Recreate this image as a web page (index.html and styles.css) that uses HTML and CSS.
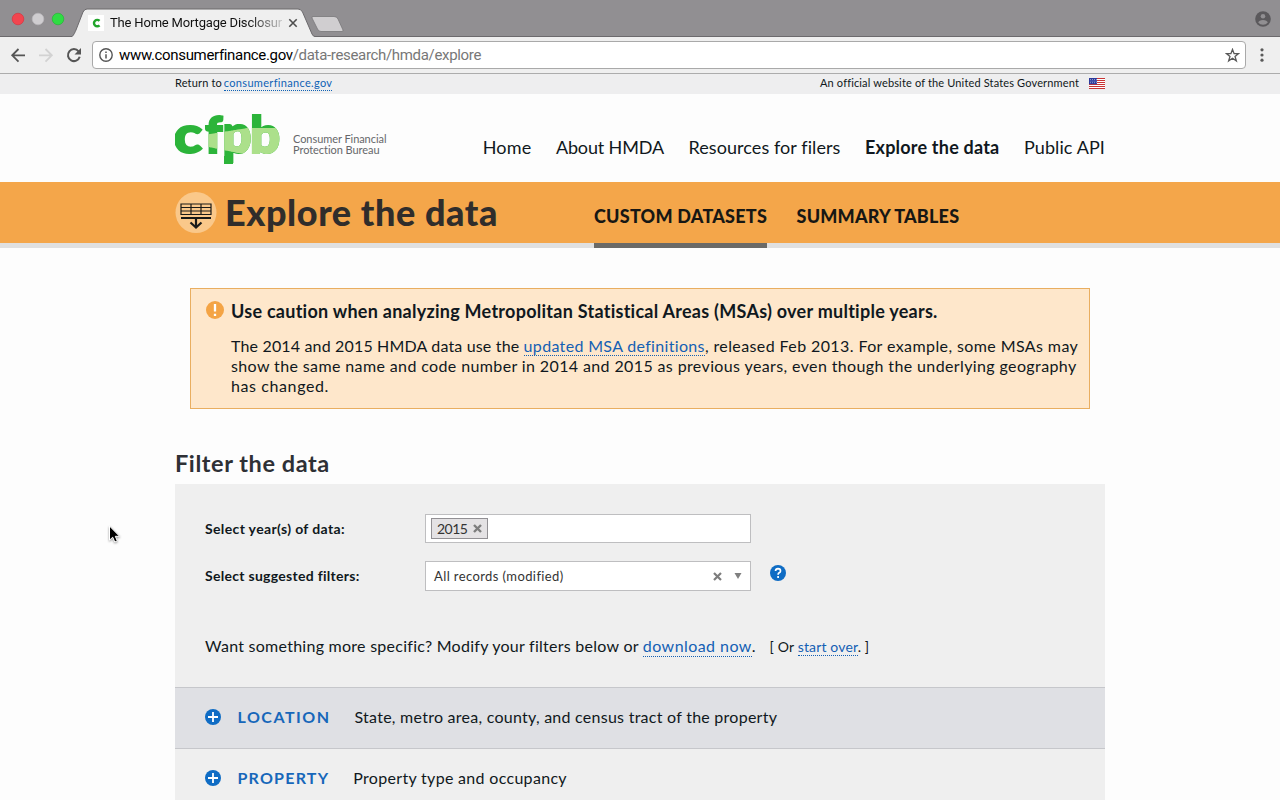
FILE: index.html
```
<!DOCTYPE html>
<html lang="en">
<head>
<meta charset="utf-8">
<title>The Home Mortgage Disclosure Act</title>
<link rel="stylesheet" href="styles.css">
</head>
<body>
<div class="tabstrip">
  <svg class="tabshapes" width="360" height="37" viewBox="0 0 360 37">
    <circle cx="18" cy="19" r="5.8" fill="#f2454f" stroke="#d8343f" stroke-width=".7"/>
    <circle cx="38" cy="19" r="5.8" fill="#cfcdd0" stroke="#bab8bb" stroke-width=".7"/>
    <circle cx="58" cy="19" r="5.8" fill="#2fdc43" stroke="#25b636" stroke-width=".7"/>
    <path d="M72 37C74 35 75 32 76 30L83 12Q84.500 9 87 9H298Q301 9 302.500 12L312 34Q313 36 315 37Z" fill="#efefef"/>
    <path d="M0 36.500H72C74 35 75 32 76 30L83 12Q84.500 9 87 9H298Q301 9 302.500 12L312 34Q313 36.500 315 36.500H360" fill="none" stroke="#6c6a6d"/>
    <path d="M313 16.500H334Q337 16.500 338 19L343 30Q343.500 31.500 342 31.500H321Q318.500 31.500 317.500 29L312 18Q311.500 16.500 313 16.500Z" fill="#d0ced0" stroke="#79777a" stroke-width=".8"/>
  </svg>
  <div class="tab">
    <svg class="favicon" width="16" height="16" viewBox="0 0 16 16"><rect width="16" height="16" fill="#fff"/><path d="M11.500 5.900A3.200 3.200 0 1 0 11.500 10.300" fill="none" stroke="#22a52c" stroke-width="2.400"/></svg>
    <span class="tab-title">The Home Mortgage Disclosur</span>
    <svg class="tab-close" width="10" height="10" viewBox="0 0 10 10"><path d="M1.300 1.300l7.400 7.400M8.700 1.300L1.300 8.700" stroke="#4e4e4e" stroke-width="1.600"/></svg>
  </div>
  <svg class="avatar" width="16" height="16" viewBox="0 0 16 16"><circle cx="8" cy="8" r="7.800" fill="#5b595c"/><circle cx="8" cy="5.300" r="2.300" fill="#918f92"/><path d="M3.200 11.600Q4 9 8 9T12.800 11.600Q11 13.800 8 13.800T3.200 11.600Z" fill="#918f92"/></svg>
</div>
<div class="toolbar">
  <svg class="nav-icons" width="92" height="36" viewBox="0 0 92 36">
    <path d="M25 18.300H12.500M18.500 12L12.200 18.300L18.500 24.600" fill="none" stroke="#555" stroke-width="1.800"/>
    <path d="M39 18.300H51.500M45.500 12L51.800 18.300L45.500 24.600" fill="none" stroke="#d2d2d2" stroke-width="1.800"/>
    <path d="M78.600 14.300A6 6 0 1 0 79.700 19.800" fill="none" stroke="#555" stroke-width="2"/>
    <path d="M81 11V17.500H74.500Z" fill="#555"/>
  </svg>
  <div class="address">
    <svg width="14" height="14" viewBox="0 0 14 14"><circle cx="7" cy="7" r="6.200" fill="none" stroke="#555" stroke-width="1.400"/><path d="M7 6.200V10.600M7 3.400V5" stroke="#555" stroke-width="1.500"/></svg>
    <span class="host">www.consumerfinance.gov</span><span class="path">/data-research/hmda/explore</span>
    <svg class="star" width="15" height="15" viewBox="0 0 16 16"><path d="M8 1.500L9.700 6H14.400L10.700 9L12.100 13.700L8 11L3.900 13.700L5.300 9L1.600 6H6.300Z" fill="none" stroke="#5a5a5a" stroke-width="1.400"/></svg>
  </div>
  <svg class="menu" width="4" height="16" viewBox="0 0 4 16"><g fill="#5a5a5a"><circle cx="2" cy="2.800" r="1.600"/><circle cx="2" cy="8" r="1.600"/><circle cx="2" cy="13.200" r="1.600"/></g></svg>
</div>
<div class="banner">
  <div class="wrap banner-row">
    <div>Return to <a class="return-link" href="#">consumerfinance.gov</a></div>
    <div class="official"><span>An official website of the United States Government</span>
      <svg width="16" height="11" viewBox="0 0 16 11"><rect width="16" height="11" fill="#fff"/><path d="M0 .5H16M0 2.500H16M0 4.500H16M0 6.500H16M0 8.500H16M0 10.500H16" stroke="#c93434" stroke-width="1.100"/><rect width="8" height="6.200" fill="#2c3a9c"/><path d="M1 1.500H8M1.500 3.100H8M1 4.700H8" stroke="#fff" stroke-width=".6" stroke-dasharray=".8 1.200"/></svg>
    </div>
  </div>
</div>
<header class="wrap masthead">
  <div class="brand">
    <svg width="108" height="56" viewBox="0 0 108 56">
      <defs>
        <clipPath id="beam"><path d="M29 22L73 15H108V43H78L29 33Z"/></clipPath>
        <g id="letters"><text transform="translate(-1.500 40) scale(1.170 1)">c</text><text transform="translate(30 40) scale(.96 1)">f</text><text transform="translate(47.500 40) scale(1 1.060)">p</text><text transform="translate(75 40) scale(1.040 1)">b</text></g>
      </defs>
      <use href="#letters" class="logo-dark"/>
      <use href="#letters" class="logo-light" clip-path="url(#beam)"/>
      <path d="M49 43H58V51H49Z" fill="#2cb43a"/>
    </svg>
    <div class="brand-name">Consumer Financial<br>Protection Bureau</div>
  </div>
  <nav class="mainnav">
    <a class="n1">Home</a><a class="n2">About HMDA</a><a class="n3">Resources for filers</a><a class="n4">Explore the data</a><a class="n5">Public API</a>
  </nav>
</header>
<div class="hero">
  <div class="wrap hero-row">
    <svg class="hero-icon" width="42" height="42" viewBox="0 0 42 42"><circle cx="21" cy="20.500" r="20.500" fill="#fac88a"/><path d="M6 12H36V22.500H6ZM6 15.500H36M6 19H36M16 12V22.500M26 12V22.500" fill="none" stroke="#1a1a18" stroke-width="1.200"/><path d="M6 26H36" stroke="#1a1a18" stroke-width="2"/><path d="M21 26V35M15.500 30.500L21 35.600L26.500 30.500" fill="none" stroke="#1a1a18" stroke-width="2.200"/></svg>
    <h1>Explore the data</h1>
    <div class="tabs"><a class="active">CUSTOM DATASETS</a><a class="second">SUMMARY TABLES</a></div>
  </div>
</div>
<main class="wrap">
  <section class="notice">
    <svg width="18" height="18" viewBox="0 0 18 18"><circle cx="9" cy="9" r="9" fill="#f4a445"/><path d="M9 3V10.500M9 12.700V15" stroke="#fff" stroke-width="2.300"/></svg>
    <div>
      <h3>Use caution when analyzing Metropolitan Statistical Areas (MSAs) over multiple years.</h3>
      <p><span class="a1">The 2014 and 2015 HMDA data use the </span><a class="link a2" href="#">updated MSA definitions</a><span class="a3">, released Feb 2013. For example, some MSAs may</span><br>show the same name and code number in 2014 and 2015 as previous years, even though the underlying geography<br><span class="a4">has changed.</span></p>
    </div>
  </section>
  <h2>Filter the data</h2>
  <section class="filters">
    <div class="form">
      <div class="row"><label>Select year(s) of data:</label>
        <div class="field years"><span class="chip">2015<svg width="9" height="9" viewBox="0 0 9 9"><path d="M1 1L8 8M8 1L1 8" stroke="#7d7d7d" stroke-width="2.400"/></svg></span></div>
      </div>
      <div class="row second-row"><label class="l2">Select suggested filters:</label>
        <div class="field choice"><span>All records (modified)</span><svg width="9" height="9" viewBox="0 0 9 9"><path d="M1 1L8 8M8 1L1 8" stroke="#7d7d7d" stroke-width="2.200"/></svg><svg class="caret" width="8" height="6" viewBox="0 0 8 6"><path d="M.5 0H7.500L4 6Z" fill="#808080"/></svg></div>
        <svg class="help" width="16" height="16" viewBox="0 0 16 16"><circle cx="8" cy="8" r="8" fill="#0f6cc4"/><path d="M5.500 6Q5.700 3.700 8 3.700Q10.500 3.800 10.500 5.900Q10.500 7.100 9.200 7.800Q8.100 8.400 8.100 9.800M8.100 11.100V12.900" fill="none" stroke="#fff" stroke-width="1.700"/></svg>
      </div>
      <div class="more"><span class="m1">Want something more specific? Modify your filters below or </span><a class="link m2" href="#">download now</a>.<small>[ Or <a class="link" href="#">start over</a>. ]</small></div>
    </div>
    <div class="group shaded"><svg width="16" height="16" viewBox="0 0 16 16"><circle cx="8" cy="8" r="8" fill="#0f6cc4"/><path d="M8 3V13M3 8H13" stroke="#fff" stroke-width="1.800"/></svg><b class="g1">LOCATION</b><span class="d1">State, metro area, county, and census tract of the property</span></div>
    <div class="group"><svg width="16" height="16" viewBox="0 0 16 16"><circle cx="8" cy="8" r="8" fill="#0f6cc4"/><path d="M8 3V13M3 8H13" stroke="#fff" stroke-width="1.800"/></svg><b class="g2">PROPERTY</b><span class="d2">Property type and occupancy</span></div>
  </section>
</main>
<svg class="cursor" width="14" height="20" viewBox="0 0 14 20"><path d="M1.500 1V15.200L4.700 12.200L6.800 17L9.300 15.900L7.300 11.300H11.600Z" fill="#000" stroke="#fff" stroke-width="1"/></svg>
</body>
</html>
```
FILE: styles.css
```
* { box-sizing: border-box; }
body { margin: 0; height: 800px; overflow: hidden; background: #fdfdfd; color: #101820; font-family: Lato, "Open Sans", sans-serif; }
svg { display: block; flex: none; }
h1, h2, h3, p { margin: 0; }
.wrap { width: 930px; margin: 0 auto; }

/* Browser window */
.tabstrip { position: relative; height: 37px; background: #918f92; border-bottom: 1px solid #6c6a6d; font-family: Roboto, sans-serif; }
.tabshapes { position: absolute; left: 0; top: 0; }
.tab { position: relative; display: flex; align-items: center; width: 300px; height: 37px; padding: 8px 0 0 88px; }
.tab-title { width: 173px; margin-left: 6px; overflow: hidden; white-space: nowrap; font-size: 13px; letter-spacing: -.18px; background: linear-gradient(90deg, #111 80%, #ccc 100%); background-clip: text; color: transparent; }
.tab-close { margin-left: 5px; }
.avatar { position: absolute; right: 9px; top: 11px; }
.toolbar { display: flex; align-items: center; height: 37px; padding-right: 16px; background: #efefef; border-bottom: 1px solid #acacac; }
.address { display: flex; align-items: center; width: 1154px; height: 28px; padding: 0 5px 0 6px; background: #fff; border: 1px solid #a9a9a9; border-radius: 4px; font: 15px Roboto, sans-serif; }
.host { margin-left: 6px; color: #000; letter-spacing: -.33px; }
.path { color: #777; letter-spacing: -.33px; }
.star { margin-left: auto; }
.menu { margin-left: auto; }

/* Site header */
.banner { height: 20px; background: #eeeeef; font-size: 11px; line-height: 18px; letter-spacing: .15px; }
.banner-row { display: flex; justify-content: space-between; }
.return-link { display: inline-block; height: 17px; margin-left: -1px; color: #0f62b5; letter-spacing: .32px; text-decoration: none; border-bottom: 1px dotted #0f62b5; }
.official { display: flex; align-items: center; gap: 10px; }
.masthead { display: flex; justify-content: space-between; height: 88px; }
.brand { display: flex; padding-top: 19px; }
.logo-dark { fill: #2cb43a; stroke: #2cb43a; }
.logo-light { fill: #ace08b; stroke: #ace08b; }
#letters { font: 900 50.500px Lato, sans-serif; stroke-width: 2px; }
.brand-name { margin: 20px 0 0 10px; font-size: 11px; line-height: 11px; letter-spacing: -.06px; color: #66676a; white-space: nowrap; }
.mainnav { display: flex; gap: 24.500px; padding-top: 41px; font-size: 18px; line-height: 24px; white-space: nowrap; }
.n1 { letter-spacing: .2px; }
.n2 { letter-spacing: -.15px; }
.n3 { letter-spacing: .08px; }
.n4 { font-weight: 700; letter-spacing: .21px; }
.n5 { letter-spacing: .1px; }
.hero { height: 66px; background: #f4a64a; border-bottom: 5px solid #e0e0e0; }
.hero-row { display: flex; height: 66px; }
.hero-icon { margin-top: 10px; }
h1 { width: 377px; margin: 8px 0 0 8px; font-size: 36px; font-weight: 900; line-height: 44px; letter-spacing: .57px; color: #302d2b; white-space: nowrap; }
.tabs { display: flex; gap: 29.500px; margin-left: -8px; font-size: 18px; font-weight: 900; line-height: 24px; color: #171714; white-space: nowrap; }
.tabs a { padding-top: 22px; letter-spacing: .23px; }
.tabs .active { border-bottom: 5px solid #6b6a67; }
.tabs .second { letter-spacing: .2px; }

/* Caution notice */
.notice { display: flex; gap: 7px; width: 900px; height: 121px; margin: 40px 15px 0; padding: 12px 0 0 15px; background: #fee7cb; border: 1px solid #e9ae60; white-space: nowrap; }
.notice h3 { font-size: 18px; font-weight: 700; line-height: 20px; letter-spacing: .26px; }
.notice p { margin-top: 15px; font-size: 16px; line-height: 20px; letter-spacing: .38px; }
.link { color: #1460b4; text-decoration: none; border-bottom: 1px dotted #1460b4; }
.notice .a1 { letter-spacing: .165px; }
.notice .a2 { letter-spacing: .33px; }
.notice .a3 { letter-spacing: .4px; }
.notice .a4 { letter-spacing: .6px; }

/* Filter form */
h2 { height: 76px; padding-top: 39px; font-size: 23.500px; font-weight: 700; line-height: 30px; letter-spacing: .57px; color: #2e3035; }
.filters { margin-top: -1px; background: #efefef; }
.form { height: 203px; padding: 30px 30px 0; }
.row { display: flex; height: 30px; }
.second-row { margin-top: 17px; }
label { width: 220px; font-size: 14px; font-weight: 700; line-height: 30px; letter-spacing: .36px; }
.l2 { letter-spacing: .29px; }
.field { display: flex; width: 326px; height: 30px; background: #fff; border: 1px solid #bebec0; }
.years { height: 29px; padding: 3px 5px; }
.chip { display: flex; align-items: center; gap: 6px; width: 57px; height: 21px; padding-left: 5px; background: #e4e2e4; border: 1px solid #929094; font-size: 14px; line-height: 18px; letter-spacing: -.5px; color: #333; }
.choice { align-items: center; padding: 0 8px; font-size: 13px; letter-spacing: .4px; color: #333; }
.choice span { flex: 1; }
.caret { margin-left: 12px; }
.help { margin: 4px 0 0 18.500px; }
.more { display: flex; align-items: baseline; margin-top: 45px; font-size: 16px; line-height: 20px; white-space: pre; }
.m1 { letter-spacing: .26px; }
.m2 { letter-spacing: .44px; }
.more small { margin-left: 14px; font-size: 14px; letter-spacing: .15px; }
.group { display: flex; align-items: center; height: 61px; padding: 0 30px 4px; border-top: 1px solid #c6c7cb; font-size: 16px; }
.group svg { position: relative; top: 1px; }
.group b { margin-left: 16.500px; color: #1767ba; }
.shaded { background: #dfe0e4; }
.g1 { letter-spacing: 1.500px; }
.g2 { letter-spacing: 1.220px; }
.group span { margin-left: 24px; }
.d1 { letter-spacing: .257px; }
.d2 { letter-spacing: .31px; }

.cursor { position: absolute; left: 108px; top: 525px; filter: drop-shadow(0 1px 1px #0006); }
```
